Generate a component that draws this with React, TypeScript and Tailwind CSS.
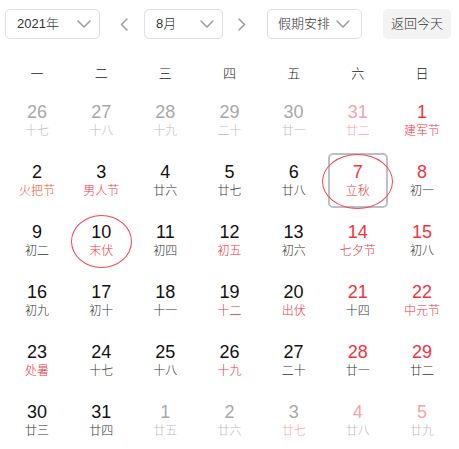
import { useState } from 'react';

type Day = {
  n: number;
  lunar: string;
  nc: string; // number colour
  lc: string; // lunar colour
  mark?: 'today' | 'circle';
};

const BLACK = 'text-[#111]';
const DARK = 'text-[#333]';
const RED = 'text-[#f2343f]';
const GRAY = 'text-[#a8a8a8]';
const LGRAY = 'text-[#bcbcbc]';
const PINK = 'text-[#f8a3aa]';

const d = (n: number, lunar: string, nc: string, lc: string, mark?: 'today' | 'circle'): Day => ({
  n,
  lunar,
  nc,
  lc,
  mark,
});

const weeks: Day[][] = [
  [
    d(26, '十七', GRAY, LGRAY),
    d(27, '十八', GRAY, LGRAY),
    d(28, '十九', GRAY, LGRAY),
    d(29, '二十', GRAY, LGRAY),
    d(30, '廿一', GRAY, LGRAY),
    d(31, '廿二', PINK, PINK),
    d(1, '建军节', RED, RED),
  ],
  [
    d(2, '火把节', BLACK, 'text-[#f4511e]'),
    d(3, '男人节', BLACK, RED),
    d(4, '廿六', BLACK, DARK),
    d(5, '廿七', BLACK, DARK),
    d(6, '廿八', BLACK, DARK),
    d(7, '立秋', RED, RED, 'today'),
    d(8, '初一', RED, DARK),
  ],
  [
    d(9, '初二', BLACK, DARK),
    d(10, '末伏', BLACK, RED, 'circle'),
    d(11, '初四', BLACK, DARK),
    d(12, '初五', BLACK, RED),
    d(13, '初六', BLACK, DARK),
    d(14, '七夕节', RED, RED),
    d(15, '初八', RED, DARK),
  ],
  [
    d(16, '初九', BLACK, DARK),
    d(17, '初十', BLACK, DARK),
    d(18, '十一', BLACK, DARK),
    d(19, '十二', BLACK, RED),
    d(20, '出伏', BLACK, RED),
    d(21, '十四', RED, DARK),
    d(22, '中元节', RED, RED),
  ],
  [
    d(23, '处暑', BLACK, RED),
    d(24, '十七', BLACK, DARK),
    d(25, '十八', BLACK, DARK),
    d(26, '十九', BLACK, RED),
    d(27, '二十', BLACK, DARK),
    d(28, '廿一', RED, DARK),
    d(29, '廿二', RED, DARK),
  ],
  [
    d(30, '廿三', BLACK, DARK),
    d(31, '廿四', BLACK, DARK),
    d(1, '廿五', GRAY, LGRAY),
    d(2, '廿六', GRAY, LGRAY),
    d(3, '廿七', GRAY, PINK),
    d(4, '廿八', PINK, LGRAY),
    d(5, '廿九', PINK, LGRAY),
  ],
];

const weekdays = ['一', '二', '三', '四', '五', '六', '日'];

function Chevron() {
  return (
    <svg width="14" height="8" viewBox="0 0 14 8" fill="none">
      <path d="M1 1 L7 7 L13 1" stroke="#9a9ca3" strokeWidth="1.5" strokeLinecap="round" strokeLinejoin="round" />
    </svg>
  );
}

function Arrow({ dir }: { dir: 'left' | 'right' }) {
  return (
    <button className="flex h-[30px] w-[20px] items-center justify-center">
      <svg width="8" height="13" viewBox="0 0 8 13" fill="none">
        <path
          d={dir === 'left' ? 'M7 1 L1.5 6.5 L7 12' : 'M1 1 L6.5 6.5 L1 12'}
          stroke="#9a9ca3"
          strokeWidth="1.5"
          strokeLinecap="round"
          strokeLinejoin="round"
        />
      </svg>
    </button>
  );
}

function Select({ label, width, pad }: { label: string; width: string; pad: string }) {
  return (
    <div
      className={`flex h-[30px] items-center justify-between rounded-[5px] border border-[#dcdfe6] bg-white ${width} ${pad}`}
    >
      <span className="text-[13px] font-light text-[#333]">{label}</span>
      <Chevron />
    </div>
  );
}

export default function App() {
  const [selected] = useState(7);

  return (
    <div
      className="h-[449px] w-[459px] bg-white px-[5px] pt-[9px]"
      style={{ fontFamily: '"Liberation Sans", "Noto Sans CJK SC", sans-serif' }}
    >
      {/* Toolbar */}
      <div className="flex items-center">
        <Select label="2021年" width="w-[95px]" pad="pl-[11px] pr-[8px]" />
        <div className="ml-[14px]">
          <Arrow dir="left" />
        </div>
        <div className="ml-[10px]">
          <Select label="8月" width="w-[79px]" pad="pl-[11px] pr-[8px]" />
        </div>
        <div className="ml-[9px]">
          <Arrow dir="right" />
        </div>
        <div className="ml-[15px]">
          <Select label="假期安排" width="w-[95px]" pad="pl-[10px] pr-[11px]" />
        </div>
        <button className="ml-[21px] flex h-[30px] w-[68px] items-center justify-center rounded-[5px] bg-[#f3f3f3] text-[13px] font-light text-[#333]">
          返回今天
        </button>
      </div>

      {/* Weekday header */}
      <div className="mt-[17px] grid h-[35px] grid-cols-7 items-center">
        {weekdays.map((w) => (
          <div key={w} className="text-center text-[13px] font-light text-[#222]">
            {w}
          </div>
        ))}
      </div>

      {/* Days */}
      <div className="grid grid-cols-7">
        {weeks.flat().map((day, i) => (
          <div key={i} className="relative flex h-[60px] flex-col items-center justify-center pb-[2px]">
            {day.mark === 'today' && day.n === selected && (
              <>
                <div className="absolute left-[2px] right-[2px] top-[2px] bottom-[3px] rounded-[5px] border-2 border-[#bdc0c8]" />
                <div className="absolute left-[-4px] right-[-3px] top-[3px] bottom-[2px] rounded-[50%] border border-[#f04a52]" />
              </>
            )}
            {day.mark === 'circle' && (
              <div className="absolute left-[2px] right-[1px] top-[4px] bottom-[3px] rounded-[50%] border border-[#f04a52]" />
            )}
            <span className={`text-[18px] leading-[20px] ${day.nc}`}>{day.n}</span>
            <span className={`mt-[1px] text-[12px] font-light leading-[16px] ${day.lc}`}>{day.lunar}</span>
          </div>
        ))}
      </div>
    </div>
  );
}
